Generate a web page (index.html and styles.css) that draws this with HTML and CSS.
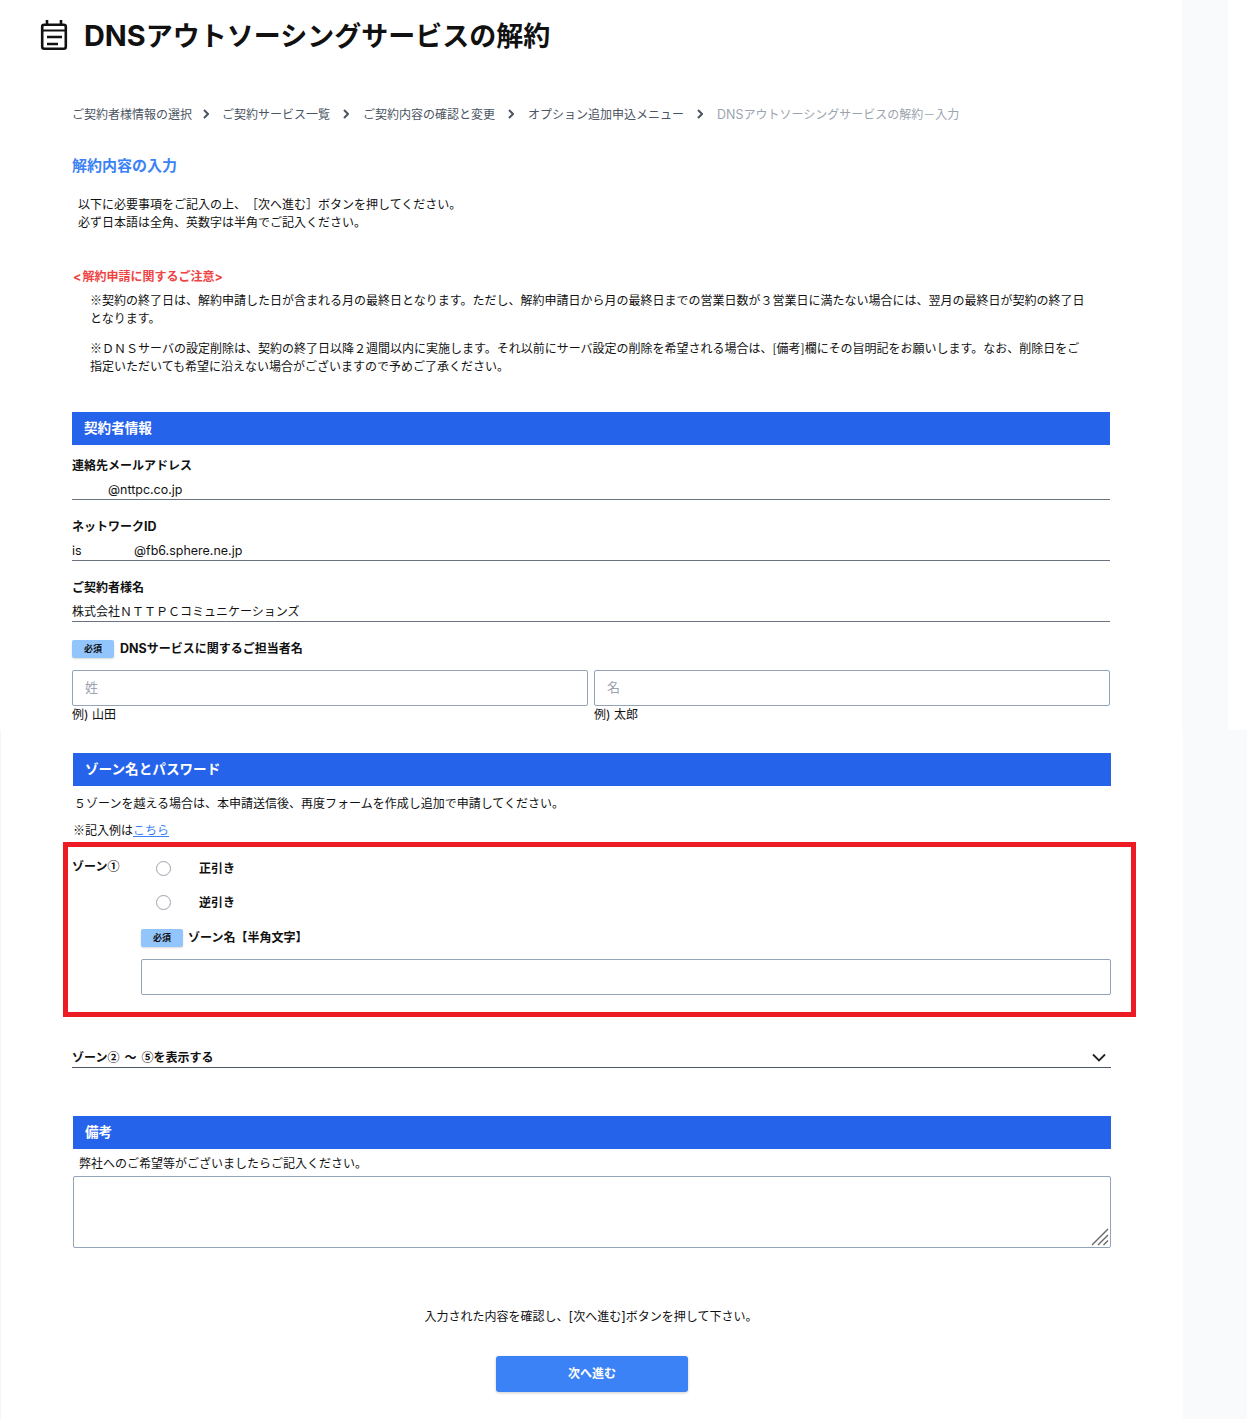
FILE: index.html
```html
<!DOCTYPE html>
<html lang="ja">
<head>
<meta charset="utf-8">
<title>DNSアウトソーシングサービスの解約</title>
<link rel="stylesheet" href="styles.css">
</head>
<body>
<div class="page">
  <header class="title-row">
    <svg class="title-icon" viewBox="0 0 28 32" fill="none" stroke="#111" stroke-width="2.6">
      <rect x="2.2" y="5.8" width="23.6" height="24" rx="2"/>
      <path d="M7 1v6M21 1v6"/>
      <path d="M2 11.5h24" stroke-width="2"/>
      <path d="M7 18h15M7 25h11" stroke-width="2.4"/>
    </svg>
    <h1 class="title"><span class="latin wide">DNS</span>アウトソーシングサービスの解約</h1>
  </header>
  <main class="content">
    <nav class="crumbs">
      <a class="crumb c1">ご契約者様情報の選択</a>
      <svg class="chev" viewBox="0 0 6 10"><path d="M1 1l4 4-4 4"/></svg>
      <a class="crumb c2">ご契約サービス一覧</a>
      <svg class="chev" viewBox="0 0 6 10"><path d="M1 1l4 4-4 4"/></svg>
      <a class="crumb c3">ご契約内容の確認と変更</a>
      <svg class="chev" viewBox="0 0 6 10"><path d="M1 1l4 4-4 4"/></svg>
      <a class="crumb c4">オプション追加申込メニュー</a>
      <svg class="chev" viewBox="0 0 6 10"><path d="M1 1l4 4-4 4"/></svg>
      <span class="crumb current"><span class="latin">DNS</span>アウトソーシングサービスの解約－入力</span>
    </nav>

    <h2 class="lead">解約内容の入力</h2>
    <p class="intro">以下に必要事項をご記入の上、［次へ進む］ボタンを押してください。<br>必ず日本語は全角、英数字は半角でご記入ください。</p>

    <p class="notice-head"><span class="latin angle">&lt;</span>解約申請に関するご注意<span class="latin angle">&gt;</span></p>
    <p class="notice">※契約の終了日は、解約申請した日が含まれる月の最終日となります。ただし、解約申請日から月の最終日までの営業日数が３営業日に満たない場合には、翌月の最終日が契約の終了日となります。</p>
    <p class="notice second">※ＤＮＳサーバの設定削除は、契約の終了日以降２週間以内に実施します。それ以前にサーバ設定の削除を希望される場合は、[備考]欄にその旨明記をお願いします。なお、削除日をご指定いただいても希望に沿えない場合がございますので予めご了承ください。</p>

    <section class="contract">
      <h3 class="bar">契約者情報</h3>
      <div class="field first">
        <div class="label">連絡先メールアドレス</div>
        <div class="value mail"><span class="latin">@nttpc.co.jp</span></div>
      </div>
      <div class="field">
        <div class="label">ネットワーク<span class="latin">ID</span></div>
        <div class="value"><span class="net-user latin">is</span><span class="latin">@fb6.sphere.ne.jp</span></div>
      </div>
      <div class="field">
        <div class="label">ご契約者様名</div>
        <div class="value">株式会社ＮＴＴＰＣコミュニケーションズ</div>
      </div>
      <div class="req-row person">
        <span class="badge">必須</span>
        <span class="label"><span class="latin">DNS</span>サービスに関するご担当者名</span>
      </div>
      <div class="names">
        <div class="name-col">
          <input class="input" type="text" placeholder="姓">
          <div class="hint">例<span class="latin">) </span>山田</div>
        </div>
        <div class="name-col">
          <input class="input" type="text" placeholder="名">
          <div class="hint">例<span class="latin">) </span>太郎</div>
        </div>
      </div>
    </section>

    <section class="zones shifted">
      <h3 class="bar">ゾーン名とパスワード</h3>
      <p class="zone-note">５ゾーンを越える場合は、本申請送信後、再度フォームを作成し追加で申請してください。</p>
      <p class="zone-eg">※記入例は<a class="link" href="#">こちら</a></p>
    </section>

    <section class="zone-box">
      <div class="zone-name">ゾーン①</div>
      <div class="zone-body">
        <label class="radio-row"><input class="radio" type="radio" name="z1"><span class="radio-text">正引き</span></label>
        <label class="radio-row"><input class="radio" type="radio" name="z1"><span class="radio-text">逆引き</span></label>
        <div class="req-row zone-req">
          <span class="badge">必須</span>
          <span class="label">ゾーン名【半角文字】</span>
        </div>
        <input class="input" type="text">
      </div>
    </section>

    <div class="accordion">
      <span class="label">ゾーン②<span class="tilde">～</span>⑤を表示する</span>
      <svg class="acc-chev" viewBox="0 0 14 9"><path d="M1 1.5l6 6 6-6"/></svg>
    </div>

    <section class="remarks shifted">
      <h3 class="bar">備考</h3>
      <p class="remarks-note">弊社へのご希望等がございましたらご記入ください。</p>
      <div class="textarea-wrap">
        <textarea class="textarea"></textarea>
        <svg class="grip" viewBox="0 0 18 18"><path d="M1 17L17 1M7 17L17 7M12.5 17L17 12.5"/></svg>
      </div>
    </section>

    <p class="confirm">入力された内容を確認し、<span class="latin">[</span>次へ進む<span class="latin">]</span>ボタンを押して下さい。</p>
    <div class="actions"><button class="next" type="button">次へ進む</button></div>
  </main>
</div>
</body>
</html>
```

FILE: styles.css
```css
* { box-sizing: border-box; }
html, body { margin: 0; padding: 0; background: #fff; }
body {
  font-family: "Noto Sans CJK JP", "Noto Sans", sans-serif;
  font-size: 12px;
  line-height: 18px;
  color: #111;
  text-spacing-trim: space-all;
}
p, h1, h2, h3 { margin: 0; }

.latin { font-family: Inter, sans-serif; font-size: 1.04em; line-height: 1; }
.wide { font-size: 1.07em; }
.angle { letter-spacing: 1px; }
.tilde { margin: 0 5px; }

.page {
  width: 1247px;
  height: 1419px;
  background-color: #fff;
  background-image:
    linear-gradient(#f9fafb, #f9fafb),
    linear-gradient(#f9fafb, #f9fafb),
    linear-gradient(#f5f6f7, #f5f6f7);
  background-repeat: no-repeat;
  background-size: 46px 730px, 64px 689px, 1px 689px;
  background-position: 1182px 0, 1183px 730px, 0 730px;
}

.title-row { display: flex; align-items: center; height: 70px; padding-left: 40px; gap: 16px; }
.title-icon { width: 28px; height: 32px; flex: none; }
.title { font-size: 27px; line-height: 36px; font-weight: 700; color: #111; }

.content { width: 1182px; padding-left: 72px; }

.crumbs { display: flex; align-items: center; height: 18px; margin-top: 35px; color: #4b5563; }
.crumb { white-space: nowrap; }
.chev { width: 6px; height: 10px; flex: none; margin: 0 14px 0 13px; fill: none; stroke: #4b5563; stroke-width: 2; }
.c1 + .chev { margin: 0 13px 0 11px; }
.current { color: #9ca3af; }

.lead { margin-top: 32px; font-size: 15px; line-height: 20px; font-weight: 700; color: #3b82f6; }
.intro { margin-top: 20px; padding-left: 6px; }
.notice-head { margin-top: 36px; margin-left: 1px; color: #ef4444; font-weight: 700; }
.notice { margin-top: 6px; padding-left: 18px; width: 1016px; }
.notice.second { margin-top: 12px; }

.bar {
  height: 33px;
  padding-left: 12px;
  background: #2563eb;
  color: #fff;
  font-size: 13.6px;
  line-height: 31px;
  font-weight: 700;
}

.contract { width: 1038px; margin-top: 37px; }
.field { margin-top: 17px; }
.field.first { margin-top: 11px; }
.label { font-weight: 700; white-space: nowrap; }
.value { margin-top: 6px; height: 20px; border-bottom: 1px solid #6b7280; }
.mail { padding-left: 36px; }
.net-user { display: inline-block; width: 62px; }

.req-row { display: flex; align-items: center; gap: 6px; }
.req-row .label { margin-top: -2px; }
.person { margin-top: 18px; }
.badge {
  width: 42px;
  height: 18px;
  border-radius: 2px;
  background: #93c5fd;
  box-shadow: 0 1px 2px rgba(0, 0, 0, .15);
  color: #111;
  font-size: 9px;
  line-height: 18px;
  font-weight: 700;
  text-align: center;
}

.names { display: flex; gap: 6px; margin-top: 12px; }
.name-col { flex: 1; }
.input {
  display: block;
  width: 100%;
  height: 36px;
  padding: 0 12px 4px;
  border: 1px solid #94a3b8;
  border-radius: 2px;
  background: #fff;
  font: inherit;
}
.input::placeholder { color: #9ca3af; font-size: 13px; }
.hint { margin-top: -1px; }

.shifted { width: 1038px; margin-left: 1px; }
.zones { margin-top: 30px; }
.zone-note { margin-top: 8px; padding-left: 1px; }
.zone-eg { margin-top: 9px; }
.link { color: #3b82f6; text-decoration: underline; }

.zone-box {
  display: flex;
  width: 1073px;
  height: 175px;
  margin: 3px 0 0 -9px;
  padding: 10px 20px 0 4px;
  border: 5px solid #ed1c24;
}
.zone-name { width: 69px; flex: none; font-weight: 700; }
.zone-body { flex: 1; margin-top: -6px; }
.radio-row { display: flex; align-items: center; height: 34px; }
.radio {
  width: 15px;
  height: 15px;
  flex: none;
  margin: 0 0 0 15px;
  appearance: none;
  border: 1px solid #9ca3af;
  border-radius: 50%;
  background: #fff;
}
.radio-text { margin-left: 28px; font-weight: 700; }
.zone-req { margin-top: 10px; gap: 5px; height: 18px; }
.zone-body .input { margin-top: 12px; }

.accordion {
  display: flex;
  justify-content: space-between;
  align-items: center;
  width: 1039px;
  height: 20px;
  margin-top: 31px;
  padding: 0 5px 2px 0;
  border-bottom: 1px solid #4b5563;
}
.acc-chev { width: 14px; height: 9px; margin-top: 2px; fill: none; stroke: #222; stroke-width: 1.8; }

.remarks { margin-top: 48px; }
.remarks-note { margin-top: 5px; padding-left: 6px; }
.textarea-wrap { position: relative; margin-top: 4px; }
.textarea {
  display: block;
  width: 100%;
  height: 72px;
  padding: 8px 12px;
  border: 1px solid #94a3b8;
  border-radius: 2px;
  background: #fff;
  font: inherit;
  resize: none;
}
.grip {
  position: absolute;
  right: 2px;
  bottom: 2px;
  width: 18px;
  height: 18px;
  fill: none;
  stroke: #666;
  stroke-width: 1.4;
  pointer-events: none;
}

.confirm { width: 1038px; margin-top: 59px; text-align: center; }
.actions { width: 1040px; margin-top: 31px; display: flex; justify-content: center; }
.next {
  width: 192px;
  height: 36px;
  padding: 0 0 2px;
  border: 0;
  border-radius: 3px;
  background: #3b82f6;
  box-shadow: 0 1px 3px rgba(0, 0, 0, .2);
  color: #fff;
  font: inherit;
  font-weight: 700;
}
```
